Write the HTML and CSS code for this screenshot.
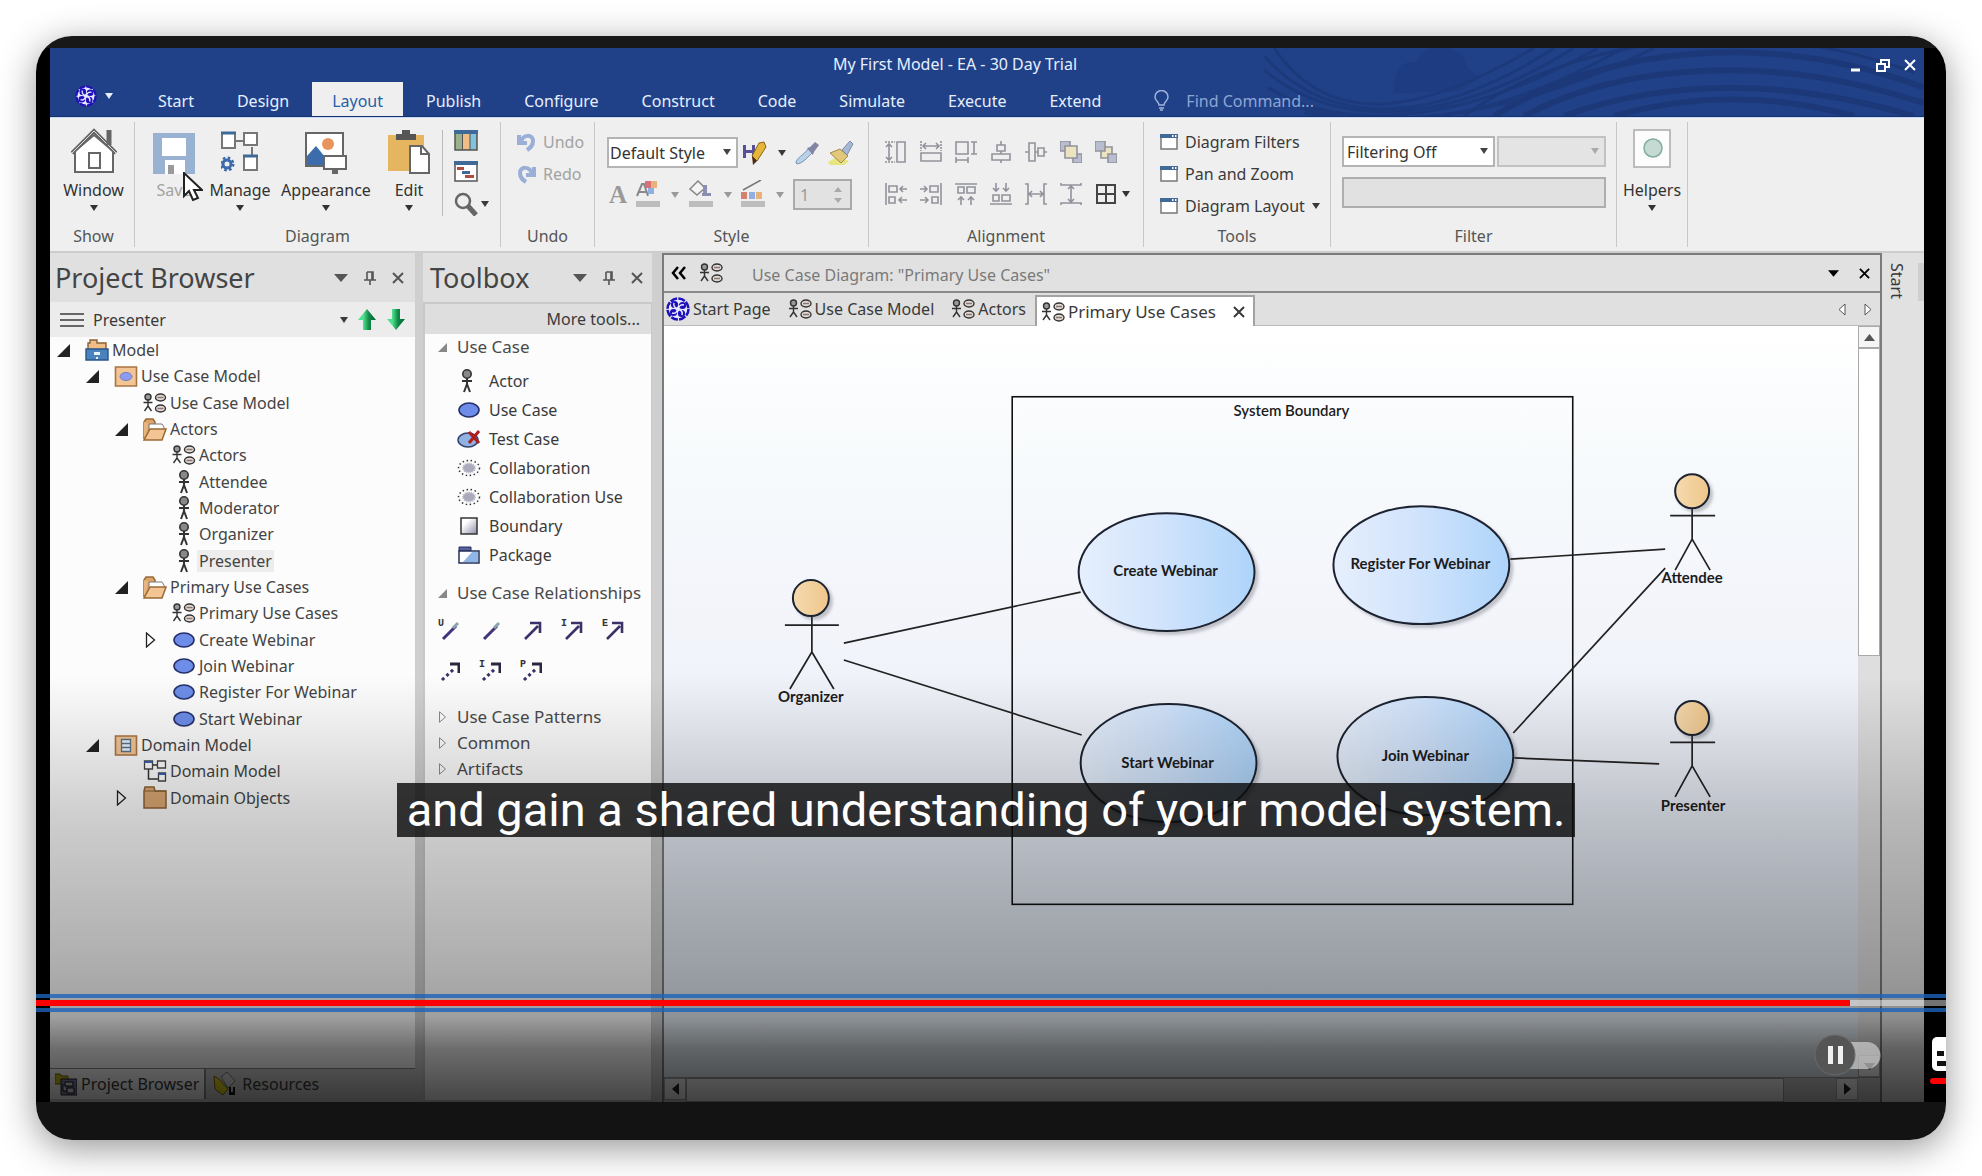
FILE: index.html
```html
<!DOCTYPE html>
<html lang="en">
<head>
<meta charset="utf-8">
<title>My First Model - EA - 30 Day Trial</title>
<link rel="stylesheet" href="styles.css">
</head>
<body>
<svg class="defs" aria-hidden="true">
  <defs>
    <linearGradient id="g-case" x1="0" x2="1"><stop offset="0" stop-color="#e6effc"/><stop offset=".45" stop-color="#d2e4fc"/><stop offset="1" stop-color="#aed4fa"/></linearGradient>
    <linearGradient id="g-head" x1="0" x2="1"><stop offset="0" stop-color="#f5dab0"/><stop offset="1" stop-color="#efc68a"/></linearGradient>
    <linearGradient id="g-box" x1="0" y1="0" x2="1" y2="1"><stop offset=".3" stop-color="#fff"/><stop offset="1" stop-color="#8c8ca8"/></linearGradient>
    <linearGradient id="g-green" x1="0" x2="1"><stop offset=".3" stop-color="#4fe08c"/><stop offset=".6" stop-color="#128a48"/><stop offset="1" stop-color="#063"/></linearGradient>
  </defs>
  <symbol id="caret" viewBox="0 0 8 6"><path d="M0 0h8L4 6z" fill="currentColor"/></symbol>
  <symbol id="caret-wide" viewBox="0 0 14 8"><path d="M0 0h14L7 8z" fill="currentColor"/></symbol>
  <symbol id="cross" viewBox="0 0 12 12"><path d="M1 1l10 10M11 1L1 11" stroke="currentColor" stroke-width="2"/></symbol>
  <symbol id="pin" viewBox="0 0 12 14"><path d="M3 1h6v8M3 1v8M0 9h12M6 9v5M8 1v8" fill="none" stroke="currentColor" stroke-width="1.6"/></symbol>
  <symbol id="open" viewBox="0 0 13 13"><path d="M13 0v13H0z" fill="currentColor"/></symbol>
  <symbol id="closed" viewBox="0 0 10 16"><path d="M1 1l8 7-8 7z" fill="#fff" fill-opacity=".5" stroke="currentColor" stroke-width="1.3"/></symbol>
  <symbol id="logo" viewBox="0 0 24 24"><circle cx="12" cy="12" r="10.500" fill="#e8e8ff" stroke="#1d10b8" stroke-width="2.500" stroke-dasharray="7 1.250"/><g fill="#1d10b8"><circle cx="8.500" cy="7.500" r="3.600"/><circle cx="16.500" cy="8.500" r="3.600"/><circle cx="15.500" cy="16.500" r="3.600"/><circle cx="7.500" cy="15.500" r="3.600"/></g><path d="M12 12c-3-1-5-3-4-6M12 12c1-3 3-5 6-4M12 12c3 1 5 3 4 6M12 12c-1 3-3 5-6 4" fill="none" stroke="#e8e8ff" stroke-width="1.500"/></symbol>
  <symbol id="uc-diagram" viewBox="0 0 23 20"><g fill="none" stroke="#333" stroke-width="1.4"><circle cx="4.500" cy="4" r="3" fill="#999"/><path d="M4.500 7v6M0 9.500h9M4.500 13L1 18M4.500 13l3.500 5"/><ellipse cx="17" cy="4.500" rx="5" ry="3.500" fill="#e3d8d2"/><ellipse cx="17" cy="15.500" rx="5" ry="3.500" fill="#e3d8d2"/><path d="M14 4.500h6M14 15.500h6" stroke="#877"/></g></symbol>
  <symbol id="person" viewBox="0 0 12 24"><circle cx="6" cy="5" r="4.200" fill="#888" stroke="#333" stroke-width="1.600"/><path d="M6 9v7M1 12h10M6 15l-3 8M6 15l3 8" fill="none" stroke="#333" stroke-width="2"/></symbol>
  <symbol id="oval" viewBox="0 0 22 16"><ellipse cx="11" cy="8" rx="10" ry="7" fill="#6d8de8" stroke="#26306a" stroke-width="1.600"/></symbol>
  <symbol id="folder-open" viewBox="0 0 24 23"><path d="M1 21V4l2-3h7l2 3v4" fill="#dba66c" stroke="#9a6a35" stroke-width="1.500"/><path d="M1 4v17l4-12V5z" fill="#e6b47c"/><path d="M6 6h13l2 3v3H6z" fill="#fff" stroke="#777"/><path d="M1 22l6-11h16l-4 11z" fill="#f3c595" stroke="#9a6a35" stroke-width="1.500"/></symbol>
  <symbol id="folder" viewBox="0 0 24 23"><path d="M1 22V5l1-4h9l1 4h11v17z" fill="#dca873" stroke="#8a6235" stroke-width="1.500"/><path d="M1 5h22" stroke="#8a6235"/></symbol>
  <symbol id="model" viewBox="0 0 24 22"><path d="M3 12V4h2V1h7v3h9v8" fill="#efbd85" stroke="#8a6235" stroke-width="1.400"/><path d="M1 10h22v11H1z" fill="#4a82bd" stroke="#27568a" stroke-width="1.400"/><path d="M9 13h6v3H9zM11 18h2v2h-2z" fill="#e8f2fa"/></symbol>
  <symbol id="pkg-uc" viewBox="0 0 23 21"><path d="M1 1h21v19H1z" fill="#f3c595" stroke="#a87440" stroke-width="1.600"/><ellipse cx="11.500" cy="10.500" rx="6" ry="4" fill="#8d9cf0" stroke="#7180c0"/></symbol>
  <symbol id="pkg-class" viewBox="0 0 23 21"><path d="M1 1h21v19H1z" fill="#f3c595" stroke="#a87440" stroke-width="1.600"/><path d="M7 4.500h9v12H7zM7 8.500h9M7 12.500h9" fill="#eaf2fa" stroke="#5a7288" stroke-width="1.300"/></symbol>
  <symbol id="class-diagram" viewBox="0 0 23 22"><path d="M5 9v10h10M9 5h5" fill="none" stroke="#333" stroke-width="1.500"/><path d="M1 1h8v8H1zM14 1h8v7h-8zM15 13h7v8h-7z" fill="#fff" stroke="#444" stroke-width="1.300"/><path d="M1 1h8v2H1zM15 13h7v2h-7z" fill="#3a5fae"/></symbol>
  <symbol id="window" viewBox="0 0 18 16"><path d="M1 1h16v14H1z" fill="#fff" stroke="#777" stroke-width="1.500"/><path d="M0 0h18v4H0z" fill="#3f6a98"/><path d="M12 1h1.500v2H12zM15 1h1.500v2H15z" fill="#fff"/></symbol>
  <symbol id="solid-line" viewBox="0 0 20 20"><path d="M3 18L16 5" stroke="#43337c" stroke-width="3"/><path d="M13 7l5-5" stroke="#8aa3ad" stroke-width="3"/></symbol>
  <symbol id="solid-arrow" viewBox="0 0 20 20"><path d="M3 18L16 5M8 2h10v10" fill="none" stroke="#3b3068" stroke-width="2.600"/></symbol>
  <symbol id="dash-arrow" viewBox="0 0 20 20"><path d="M2 18L15 6" stroke="#3b3068" stroke-width="3" stroke-dasharray="3 3"/><path d="M10 2h9v9" fill="none" stroke="#2b2540" stroke-width="3"/></symbol>
  <symbol id="collab" viewBox="0 0 24 18"><ellipse cx="12" cy="9" rx="10.500" ry="7.500" fill="none" stroke="#333" stroke-width="1.500" stroke-dasharray="1.500 2.500"/><ellipse cx="12" cy="9" rx="6" ry="4.500" fill="#aab" stroke="#bbc" stroke-width="2" stroke-dasharray="1 1"/></symbol>
</svg>

<main class="player">
  <div class="app">
    <header class="titlebar">
      <svg class="swirl" viewBox="0 0 660 69" preserveAspectRatio="none" aria-hidden="true">
        <path d="M130 46c0-30 10-32 22-32 4-20 50-20 50 4l14 12-20 14z" fill="#1e3c82"/>
        <g fill="none" stroke="#1c3a7b" stroke-width="3">
          <path d="M10 0c60 90 160 60 260 0"/><path d="M0 8c70 80 180 65 290-8"/><path d="M0 22c70 60 180 60 310-22"/><path d="M4 40c70 45 190 40 330-40"/><path d="M20 55c80 30 190 30 340-55"/><path d="M40 66c90 15 210 5 350-66"/>
        </g>
        <g fill="none" stroke="#1c3878" stroke-width="6">
          <path d="M230 69C340 0 500-20 660 40"/><path d="M260 69C360 15 510 5 660 56"/><path d="M300 69C400 32 520 30 650 69"/><path d="M350 69c70-20 150-25 240 0"/><path d="M200 69C300-5 480-40 650 25" stroke-width="3"/>
        </g>
      </svg>
      <div class="title-row">
        <h1 class="app-title">My First Model - EA - 30 Day Trial</h1>
        <div class="window-buttons">
          <button aria-label="Minimize"><svg width="12" height="14"><path d="M1 12h9" stroke="#fff" stroke-width="3"/></svg></button>
          <button aria-label="Restore"><svg width="14" height="14"><path d="M5 5V2h8v7h-3M1 6h8v7H1z" fill="none" stroke="#fff" stroke-width="2"/></svg></button>
          <button aria-label="Close"><svg width="12" height="12"><use href="#cross"/></svg></button>
        </div>
      </div>
      <nav class="menu">
        <button class="app-menu" aria-label="Application menu"><svg width="22" height="24"><use href="#logo"/></svg><svg width="8" height="6"><use href="#caret"/></svg></button>
        <a href="#">Start</a><a href="#">Design</a><a href="#" class="active">Layout</a><a href="#">Publish</a><a href="#">Configure</a><a href="#">Construct</a><a href="#">Code</a><a href="#">Simulate</a><a href="#">Execute</a><a href="#">Extend</a>
        <label class="find"><svg width="16" height="22" fill="none" stroke="#9fb2da" stroke-width="1.500"><path d="M5 15c0-3-4-4-4-8a6 6 0 0 1 13 0c0 4-4 5-4 8zM5 18h5M6 20h3"/></svg><input type="text" placeholder="Find Command..." aria-label="Find Command"></label>
      </nav>
    </header>

    <section class="ribbon">
      <div class="group g-show">
        <div class="tools center">
          <button class="big"><svg width="46" height="48" fill="none" stroke="#666" stroke-width="2"><path d="M4 45V24L23 8l19 16v21z" fill="#fff"/><path d="M1 26L23 4l22 22" stroke-width="4"/><path d="M1 26L23 4l22 22" stroke="#ddd" stroke-width="1"/><path d="M38 18V3" stroke-width="5"/><path d="M18 26h11v15H18z"/></svg>Window<svg width="8" height="6"><use href="#caret"/></svg></button>
        </div>
        <h2>Show</h2>
      </div>
      <div class="group g-diagram">
        <div class="tools">
          <button class="big w-s" disabled><svg width="42" height="48"><path d="M0 6h42v41H0z" fill="#9ab2d2"/><path d="M9 11h24v18H9zM12 33h20v14H12z" fill="#fff"/><path d="M15 38h6v9h-6z" fill="#9a9a9a"/></svg>Save</button>
          <button class="big w-m"><svg width="38" height="48" fill="none" stroke="#777" stroke-width="2"><path d="M15 14h8M31 20v8"/><path d="M1 6h13v15H1zM23 6h13v12H23zM23 29h13v14H23z" fill="#fff"/><path d="M0 6h15M22 29h15" stroke="#3f6a98" stroke-width="3"/><circle cx="6" cy="37" r="4" stroke="#3c6cac" stroke-width="3"/><circle cx="6" cy="37" r="6" stroke="#3c6cac" stroke-width="3" stroke-dasharray="2.500 2.200"/></svg>Manage<svg width="8" height="6"><use href="#caret"/></svg></button>
          <button class="big w-l"><svg width="42" height="48"><path d="M1 6h37v33H1z" fill="#fff" stroke="#666" stroke-width="2"/><circle cx="23" cy="17" r="6" fill="#e8945c"/><path d="M2 38V29l9-10 14 17v2z" fill="#3c6cac"/><path d="M19 29h22v13H19z" fill="#fff" stroke="#666" stroke-width="2"/><path d="M27 42h6v5h-6z" fill="#666"/></svg>Appearance<svg width="8" height="6"><use href="#caret"/></svg></button>
          <button class="big w-e"><svg width="42" height="48"><path d="M0 8h36v36H0z" fill="#e5b55f"/><path d="M8 13V7h6V3h8v4h6v6z" fill="#555"/><path d="M22 19h12l7 8v19H22z" fill="#fff" stroke="#666" stroke-width="2"/><path d="M33 19v8h8" fill="none" stroke="#666" stroke-width="2"/></svg>Edit<svg width="8" height="6"><use href="#caret"/></svg></button>
          <div class="small-col">
            <button aria-label="Columns"><svg width="24" height="21"><path d="M1 1h22v19H1z" fill="#99b08a" stroke="#555" stroke-width="1.500"/><path d="M9 4h7v15H9z" fill="#f0bd85"/><path d="M16 4h6v15h-6z" fill="#7fc3de"/><path d="M8.500 4v16M16 4v16" stroke="#555"/><path d="M0 0h24v4H0z" fill="#3f6a98"/></svg></button>
            <button aria-label="Schedule"><svg width="24" height="21"><path d="M1 1h22v19H1z" fill="#fff" stroke="#555" stroke-width="1.500"/><path d="M0 0h24v4H0z" fill="#3f6a98"/><path d="M3 6h7v3H3zM11 14h9v3h-9z" fill="#b04b42"/><path d="M8 10h8v3H8z" fill="#3f6a98"/></svg></button>
            <button aria-label="Zoom"><svg width="24" height="24" fill="none" stroke="#666"><circle cx="9" cy="9" r="7" stroke-width="2.500"/><path d="M14 14l8 9" stroke-width="5"/></svg><svg width="8" height="6"><use href="#caret"/></svg></button>
          </div>
        </div>
        <h2>Diagram</h2>
      </div>
      <div class="group g-undo">
        <div class="tools rows">
          <button class="line" disabled><svg width="19" height="19" fill="none" stroke="#9aaed6" stroke-width="4"><path d="M2 2v8h8M4 9c2-8 12-8 12-1 0 5-3 7-6 9"/></svg>Undo</button>
          <button class="line" disabled><svg width="19" height="19" fill="none" stroke="#9aaed6" stroke-width="4"><path d="M17 2v8H9M15 9C13 1 3 1 3 8c0 5 3 7 6 9"/></svg>Redo</button>
        </div>
        <h2>Undo</h2>
      </div>
      <div class="group g-style">
        <div class="tools pairs">
          <div class="pair">
            <span class="select s-style"><select aria-label="Style"><option>Default Style</option></select><svg width="8" height="6"><use href="#caret"/></svg></span>
            <button aria-label="Save style"><svg width="24" height="24"><path d="M0 4h12v13H0z" fill="#56509a"/><path d="M3 4h6v5H3zM3 12h6v5H3z" fill="#eee"/><path d="M16 2l5-1 2 5-9 14-5-5z" fill="#e4b63a" stroke="#8a6516"/><path d="M9 15l5 5-4 4z" fill="#4a2a10"/></svg><svg width="8" height="6"><use href="#caret"/></svg></button>
            <button aria-label="Pick style"><svg width="24" height="24"><path d="M1 22c0-5 8-8 12-14l4 4c-5 5-9 10-15 11z" fill="#b9d2e8" stroke="#7892b0"/><path d="M12 7l3-1 5-5 4 3-5 7-1 3z" fill="#8285a3"/></svg></button>
            <button aria-label="Apply style"><svg width="26" height="24"><path d="M0 21l9-5 12 4-5 4H2z" fill="#e6e57e"/><path d="M2 12l10-4 8 7-7 7z" fill="#e2c878" stroke="#a58a4c"/><path d="M14 9l8-9 3 3-6 11z" fill="#a7b8d4" stroke="#7d8ba8"/></svg></button>
          </div>
          <div class="pair muted">
            <button class="font-a" aria-label="Font" disabled>A</button>
            <button aria-label="Font colour" disabled><svg width="24" height="30"><path d="M1 16L6 4h2l4 12M3 12h7" fill="none" stroke="#888" stroke-width="2"/><path d="M9 1h6v7H9z" fill="#d8707a"/><path d="M15 1h6v7h-6z" fill="#e8b27c"/><path d="M12 8h6v6h-6z" fill="#8fb0e4"/><path d="M0 21h24v6H0z" fill="#bdbdbd"/></svg><svg width="8" height="6"><use href="#caret"/></svg></button>
            <button aria-label="Fill colour" disabled><svg width="24" height="30"><path d="M1 9l8-8 7 7-8 7z" fill="#f5f5f5" stroke="#888" stroke-width="1.500"/><path d="M14 5h4v8h4v3h-9v-3h1z" fill="#8a8fb0"/><path d="M0 21h24v6H0z" fill="#bdbdbd"/></svg><svg width="8" height="6"><use href="#caret"/></svg></button>
            <button aria-label="Line colour" disabled><svg width="24" height="30"><path d="M2 10L20 0" stroke="#777" stroke-width="1.500"/><path d="M0 12h6v7H0z" fill="#d8806f"/><path d="M8 12h6v7H8z" fill="#8fb0e4"/><path d="M15 12h6v7h-6z" fill="#e8b27c"/><path d="M0 21h24v6H0z" fill="#bdbdbd"/></svg><svg width="8" height="6"><use href="#caret"/></svg></button>
            <span class="spin"><input type="text" value="1" aria-label="Line width" disabled><svg width="8" height="16"><path d="M0 5h8L4 0zM0 11h8l-4 5z" fill="#aaa"/></svg></span>
          </div>
        </div>
        <h2>Style</h2>
      </div>
      <div class="group g-align">
        <div class="tools aligns">
          <button aria-label="Same height"><svg viewBox="0 0 22 22"><path d="M12 1h8v20h-8zM4 3v16M1 6l3-3 3 3M1 16l3 3 3-3"/><path d="M0 1h10M0 21h10" stroke-dasharray="2 1"/></svg></button>
          <button aria-label="Same width"><svg viewBox="0 0 22 22"><path d="M1 12h20v8H1zM3 5h16M6 2L3 5l3 3M16 2l3 3-3 3"/><path d="M1 0v10M21 0v10" stroke-dasharray="2 1"/></svg></button>
          <button aria-label="Same size"><svg viewBox="0 0 22 22"><path d="M1 1h12v12H1zM16 1h6M16 13h6M19 1v12M1 16v6M13 16v6M1 19h12"/></svg></button>
          <button aria-label="Centre horizontally"><svg viewBox="0 0 22 22"><path d="M7 4h8v6H7zM2 13h18v6H2zM11 0v4M11 10v3M11 19v3"/></svg></button>
          <button aria-label="Centre vertically"><svg viewBox="0 0 22 22"><path d="M4 2h6v18H4zM13 7h6v8h-6zM0 11h4M10 11h3M19 11h3"/></svg></button>
          <button aria-label="Bring to front"><svg viewBox="0 0 22 22"><path d="M0 0h10v10H0zM13 13h9v9h-9z" fill="#b9bdd0"/><path d="M5 5h12v12H5z" fill="#ece4c0"/></svg></button>
          <button aria-label="Send to back"><svg viewBox="0 0 22 22"><path d="M6 6h11v11H6z" fill="#ece4c0"/><path d="M0 0h10v10H0zM13 13h9v9h-9z" fill="#b9bdd0"/></svg></button>
          <button aria-label="Align left"><svg viewBox="0 0 22 22"><path d="M1 0v22M4 3h8v6H4zM4 14h6v6H4zM22 6h-7M18 3l-3 3 3 3M22 17h-8M17 14l-3 3 3 3"/></svg></button>
          <button aria-label="Align right"><svg viewBox="0 0 22 22"><path d="M21 0v22M10 3h8v6h-8zM12 14h6v6h-6zM0 6h7M4 3l3 3-3 3M0 17h8M5 14l3 3-3 3"/></svg></button>
          <button aria-label="Align top"><svg viewBox="0 0 22 22"><path d="M0 1h22M3 4h6v6H3zM12 4h8v6h-8zM6 22v-8M3 17l3-3 3 3M16 22v-8M13 17l3-3 3 3"/></svg></button>
          <button aria-label="Align bottom"><svg viewBox="0 0 22 22"><path d="M0 21h22M3 12h6v6H3zM12 12h8v6h-8zM6 0v8M3 5l3 3 3-3M16 0v8M13 5l3 3 3-3"/></svg></button>
          <button aria-label="Space across"><svg viewBox="0 0 22 22"><path d="M0 1h3v20H0M22 1h-3v20h3M4 11h14M7 8l-3 3 3 3M15 8l3 3-3 3"/></svg></button>
          <button aria-label="Space down"><svg viewBox="0 0 22 22"><path d="M1 0v2h20V0M1 22v-2h20v2M11 3v16M8 6l3-3 3 3M8 16l3 3 3-3"/></svg></button>
          <button class="dark" aria-label="Grid"><svg viewBox="0 0 22 22"><path d="M2 2h18v18H2zM11 2v18M2 11h18"/></svg></button>
          <svg class="grid-caret" width="8" height="6"><use href="#caret"/></svg>
        </div>
        <h2>Alignment</h2>
      </div>
      <div class="group g-tools">
        <div class="tools rows">
          <button class="line"><svg width="18" height="16"><use href="#window"/></svg>Diagram Filters</button>
          <button class="line"><svg width="18" height="16"><use href="#window"/></svg>Pan and Zoom</button>
          <button class="line"><svg width="18" height="16"><use href="#window"/></svg>Diagram Layout<svg width="8" height="6"><use href="#caret"/></svg></button>
        </div>
        <h2>Tools</h2>
      </div>
      <div class="group g-filter">
        <div class="tools filters">
          <div class="filter-row">
            <span class="select s-filter"><select aria-label="Filter mode"><option>Filtering Off</option></select><svg width="8" height="6"><use href="#caret"/></svg></span>
            <span class="select s-off"><select aria-label="Filter field" disabled><option></option></select><svg width="8" height="6"><use href="#caret"/></svg></span>
          </div>
          <input class="filter-text" type="text" aria-label="Filter text" disabled>
        </div>
        <h2>Filter</h2>
      </div>
      <div class="group g-help">
        <div class="tools center">
          <button class="big"><svg width="38" height="48"><path d="M1 3h36v37H1z" fill="#fcfcfc" stroke="#aaa" stroke-width="1.500"/><circle cx="20" cy="21" r="9" fill="#c5dad2" stroke="#7fae9c" stroke-width="1.500"/></svg>Helpers<svg width="8" height="6"><use href="#caret"/></svg></button>
        </div>
      </div>
    </section>

    <div class="workspace">
      <section class="panel browser">
        <div class="panel-head"><h2>Project Browser</h2>
          <button aria-label="Panel menu"><svg width="14" height="8"><use href="#caret-wide"/></svg></button><button aria-label="Pin panel"><svg width="12" height="14"><use href="#pin"/></svg></button><button aria-label="Close panel"><svg width="12" height="12"><use href="#cross"/></svg></button>
        </div>
        <div class="locator">
          <svg width="24" height="16"><path d="M0 2h24M0 8h24M0 14h24" stroke="#666" stroke-width="2"/></svg><span>Presenter</span>
          <svg width="8" height="6"><use href="#caret"/></svg>
          <button aria-label="Move up"><svg width="20" height="22"><path d="M10 0l9 11h-5v10H6V11H1z" fill="url(#g-green)"/></svg></button>
          <button aria-label="Move down"><svg width="20" height="22"><path d="M10 21l9-11h-5V0H6v10H1z" fill="url(#g-green)"/></svg></button>
        </div>
        <ul class="tree">
          <li class="l0"><svg class="tw" width="13" height="13"><use href="#open"/></svg><svg width="24" height="22"><use href="#model"/></svg><span>Model</span></li>
          <li class="l1"><svg class="tw" width="13" height="13"><use href="#open"/></svg><svg width="24" height="21"><use href="#pkg-uc"/></svg><span>Use Case Model</span></li>
          <li class="l2"><i class="tw"></i><svg width="24" height="20"><use href="#uc-diagram"/></svg><span>Use Case Model</span></li>
          <li class="l2"><svg class="tw" width="13" height="13"><use href="#open"/></svg><svg width="24" height="23"><use href="#folder-open"/></svg><span>Actors</span></li>
          <li class="l3"><i class="tw"></i><svg width="24" height="20"><use href="#uc-diagram"/></svg><span>Actors</span></li>
          <li class="l3"><i class="tw"></i><svg width="24" height="24"><use href="#person"/></svg><span>Attendee</span></li>
          <li class="l3"><i class="tw"></i><svg width="24" height="24"><use href="#person"/></svg><span>Moderator</span></li>
          <li class="l3"><i class="tw"></i><svg width="24" height="24"><use href="#person"/></svg><span>Organizer</span></li>
          <li class="l3 selected"><i class="tw"></i><svg width="24" height="24"><use href="#person"/></svg><span>Presenter</span></li>
          <li class="l2"><svg class="tw" width="13" height="13"><use href="#open"/></svg><svg width="24" height="23"><use href="#folder-open"/></svg><span>Primary Use Cases</span></li>
          <li class="l3"><i class="tw"></i><svg width="24" height="20"><use href="#uc-diagram"/></svg><span>Primary Use Cases</span></li>
          <li class="l3"><svg class="tw" width="13" height="16"><use href="#closed"/></svg><svg width="24" height="16"><use href="#oval"/></svg><span>Create Webinar</span></li>
          <li class="l3"><i class="tw"></i><svg width="24" height="16"><use href="#oval"/></svg><span>Join Webinar</span></li>
          <li class="l3"><i class="tw"></i><svg width="24" height="16"><use href="#oval"/></svg><span>Register For Webinar</span></li>
          <li class="l3"><i class="tw"></i><svg width="24" height="16"><use href="#oval"/></svg><span>Start Webinar</span></li>
          <li class="l1"><svg class="tw" width="13" height="13"><use href="#open"/></svg><svg width="24" height="21"><use href="#pkg-class"/></svg><span>Domain Model</span></li>
          <li class="l2"><i class="tw"></i><svg width="24" height="22"><use href="#class-diagram"/></svg><span>Domain Model</span></li>
          <li class="l2"><svg class="tw" width="13" height="16"><use href="#closed"/></svg><svg width="24" height="23"><use href="#folder"/></svg><span>Domain Objects</span></li>
        </ul>
        <div class="panel-tabs">
          <button class="current"><svg width="22" height="24"><path d="M0 2h5l2 2h6v8H0z" fill="#c9bb1e" stroke="#6e6712"/><path d="M6 7h16v16H6z" fill="#7d7fa8" stroke="#222"/><path d="M10 10h8v4h-8zM12 16h7v5h-7zM8 12v7h4" fill="#ddd" stroke="#111"/></svg>Project Browser</button>
          <button><svg width="24" height="24"><path d="M1 4l5 3 9 10-5 6-8-6z" fill="#e6d520" stroke="#6e6712"/><path d="M8 5l6-5 8 9-7 7z" fill="#ddd" stroke="#777"/><path d="M16 23v-8h2v5h2v-5h2v8z" fill="#111"/></svg>Resources</button>
        </div>
      </section>

      <section class="panel toolbox">
        <div class="panel-head"><h2>Toolbox</h2>
          <button aria-label="Toolbox menu"><svg width="14" height="8"><use href="#caret-wide"/></svg></button><button aria-label="Pin toolbox"><svg width="12" height="14"><use href="#pin"/></svg></button><button aria-label="Close toolbox"><svg width="12" height="12"><use href="#cross"/></svg></button>
        </div>
        <div class="toolbox-body">
          <a href="#" class="more">More tools...</a>
          <h3><svg width="9" height="9"><use href="#open"/></svg>Use Case</h3>
          <ul class="items">
            <li><svg class="figure" width="12" height="24"><use href="#person"/></svg><span>Actor</span></li>
            <li><svg width="22" height="16"><use href="#oval"/></svg><span>Use Case</span></li>
            <li><svg width="24" height="18"><ellipse cx="11" cy="10" rx="10" ry="7" fill="#8fb2e0" stroke="#33406e" stroke-width="1.500"/><path d="M12 2l10 11M22 1L12 13" stroke="#b01c1c" stroke-width="3"/></svg><span>Test Case</span></li>
            <li><svg width="24" height="18"><use href="#collab"/></svg><span>Collaboration</span></li>
            <li><svg width="24" height="18"><use href="#collab"/></svg><span>Collaboration Use</span></li>
            <li><svg width="20" height="18"><path d="M2 1h16v16H2z" fill="url(#g-box)" stroke="#333" stroke-width="1.500"/></svg><span>Boundary</span></li>
            <li><svg width="22" height="18"><path d="M1 1h12v4H1z" fill="#56609a" stroke="#25305a"/><path d="M1 5h20v12H1z" fill="#fff" stroke="#25305a" stroke-width="1.500"/><path d="M20 6v10H5L14 6z" fill="#8fb6e6"/></svg><span>Package</span></li>
          </ul>
          <h3><svg width="9" height="9"><use href="#open"/></svg>Use Case Relationships</h3>
          <div class="relations">
            <button aria-label="Use"><small>U</small><svg width="20" height="20"><use href="#solid-line"/></svg></button>
            <button aria-label="Associate"><svg width="20" height="20"><use href="#solid-line"/></svg></button>
            <button aria-label="Generalize"><svg width="20" height="20"><use href="#solid-arrow"/></svg></button>
            <button aria-label="Include"><small>I</small><svg width="20" height="20"><use href="#solid-arrow"/></svg></button>
            <button aria-label="Extend"><small>E</small><svg width="20" height="20"><use href="#solid-arrow"/></svg></button>
            <button aria-label="Realize"><svg width="20" height="20"><use href="#dash-arrow"/></svg></button>
            <button aria-label="Invokes"><small>I</small><svg width="20" height="20"><use href="#dash-arrow"/></svg></button>
            <button aria-label="Precedes"><small>P</small><svg width="20" height="20"><use href="#dash-arrow"/></svg></button>
          </div>
          <h3 class="folded"><svg width="9" height="12"><use href="#closed"/></svg>Use Case Patterns</h3>
          <h3 class="folded"><svg width="9" height="12"><use href="#closed"/></svg>Common</h3>
          <h3 class="folded"><svg width="9" height="12"><use href="#closed"/></svg>Artifacts</h3>
        </div>
      </section>

      <section class="document">
        <div class="doc-head">
          <svg width="15" height="14" fill="none" stroke="#000" stroke-width="2.500"><path d="M7 1L2 7l5 6M14 1L9 7l5 6"/></svg>
          <svg width="23" height="20"><use href="#uc-diagram"/></svg>
          <h2>Use Case Diagram: "Primary Use Cases"</h2>
          <button aria-label="Diagram menu"><svg width="11" height="7"><use href="#caret-wide"/></svg></button><button aria-label="Close diagram"><svg width="11" height="11"><use href="#cross"/></svg></button>
        </div>
        <div class="doc-tabs">
          <button><svg width="24" height="24"><use href="#logo"/></svg>Start Page</button>
          <button><svg width="23" height="20"><use href="#uc-diagram"/></svg>Use Case Model</button>
          <button><svg width="23" height="20"><use href="#uc-diagram"/></svg>Actors</button>
          <button class="current"><svg width="23" height="20"><use href="#uc-diagram"/></svg>Primary Use Cases<svg class="shut" width="12" height="12"><use href="#cross"/></svg></button>
          <span class="tab-nav"><button aria-label="Previous tab"><svg width="8" height="13"><path d="M7 1v11L1 6.500z" fill="#fff" stroke="#555"/></svg></button><button aria-label="Next tab"><svg width="8" height="13"><path d="M1 1v11l6-5.500z" fill="#fff" stroke="#555"/></svg></button></span>
        </div>
        <div class="canvas-row">
          <svg class="canvas" viewBox="664 326 1195 751" role="img" aria-label="Primary Use Cases diagram">
            <defs><filter id="shade" x="-10%" y="-10%" width="125%" height="125%"><feDropShadow dx="3" dy="3" stdDeviation="1.500" flood-color="#445" flood-opacity=".3"/></filter></defs>
            <rect x="1012.500" y="396.500" width="561" height="508" fill="none" stroke="#111" stroke-width="1.600"/>
            <g stroke="#222" stroke-width="1.700" fill="none">
              <path d="M844 643l237-51M844 660l238 75M1511 559l155-10M1514 733l152-165M1515 758l145 6"/>
              <path d="M785 625h54M812 616v36M812 652l-22 37M812 652l22 37M1671 515.500h45M1693 508v31M1693 539l-17 31M1693 539l18 31M1671 742.500h45M1693 735v31M1693 766l-17 31M1693 766l18 31"/>
            </g>
            <g stroke="#1c2430" stroke-width="2" filter="url(#shade)">
              <g fill="url(#g-case)"><ellipse cx="1167" cy="572" rx="88" ry="59"/><ellipse cx="1169" cy="763" rx="88" ry="59"/><ellipse cx="1422" cy="565" rx="88" ry="59"/><ellipse cx="1426" cy="756" rx="88" ry="59"/></g>
              <g fill="url(#g-head)"><circle cx="811" cy="598" r="18"/><circle cx="1693" cy="491" r="17"/><circle cx="1693" cy="718" r="17"/></g>
            </g>
            <g class="labels">
              <text class="boundary" x="1292" y="416">System Boundary</text>
              <text x="1166" y="576">Create Webinar</text><text x="1168" y="768">Start Webinar</text><text x="1421" y="569">Register For Webinar</text><text x="1426" y="761">Join Webinar</text>
              <text x="811" y="702">Organizer</text><text x="1693" y="583">Attendee</text><text x="1694" y="811">Presenter</text>
            </g>
          </svg>
          <div class="vscroll"><span class="sb"><svg width="11" height="7"><path d="M0 7h11L5.500 0z" fill="#555"/></svg></span><span class="thumb"></span><span class="sb end"><svg width="11" height="7"><path d="M0 0h11L5.500 7z" fill="#222"/></svg></span></div>
        </div>
        <div class="hscroll"><span class="sb"><svg width="7" height="12"><path d="M7 0v12L0 6z" fill="#222"/></svg></span><span class="thumb"></span><span class="sb"><svg width="7" height="12"><path d="M0 0v12l7-6z" fill="#222"/></svg></span></div>
      </section>
      <aside class="dock"><button>Start</button></aside>
    </div>
  </div>

  <div class="scrim"></div>
  <svg class="cursor" width="20" height="30" viewBox="0 0 20 30"><path d="M1 1v23l5-5 4 9 5-2-4-8h8z" fill="#fff" stroke="#222" stroke-width="2"/></svg>
  <p class="caption"><span>and gain a shared understanding of your model system.</span></p>
  <div class="seek"><input type="range" min="0" max="100" value="95" aria-label="Seek"></div>
  <button class="autoplay" aria-label="Autoplay"><svg width="80" height="44"><path d="M30 9h24a13 13 0 0 1 0 27H30z" fill="#d8d8d8" fill-opacity=".65"/><circle cx="22" cy="22" r="20" fill="#555" stroke="#6a6a6a"/><path d="M15 13h5v18h-5zM25 13h5v18h-5z" fill="#f0f0f0"/></svg></button>
  <button class="cc" aria-label="Subtitles"><svg width="40" height="50"><rect x="2" y="1" width="50" height="34" rx="5" fill="#fff"/><path d="M7 15h7v5H7zM7 25h30v5H7z" fill="#111"/><rect x="0" y="42" width="50" height="6" rx="3" fill="#f00"/></svg></button>
</main>
</body>
</html>
```
FILE: styles.css
```css
* { box-sizing: border-box; }
body { margin: 0; min-height: 100vh; padding: 36px; display: flex; background: #fff; color: #3a3a3a; font: 16px/22px "Noto Sans", "Open Sans", sans-serif; }
h1, h2, h3, p, ul { margin: 0; padding: 0; font-weight: 400; font-size: 16px; }
ul { list-style: none; }
button { margin: 0; padding: 0; border: 0; background: none; color: inherit; font: inherit; display: inline-flex; align-items: center; white-space: nowrap; }
select, input { font: inherit; color: inherit; }
a { color: inherit; text-decoration: none; }
svg { display: block; flex: none; }
.defs { position: absolute; width: 0; height: 0; }

.player { position: relative; flex: 1; min-width: 0; display: flex; padding: 12px 22px 38px 14px; overflow: hidden; border-radius: 36px; background: linear-gradient(#181818 0 12px, #000 12px calc(100% - 38px), #131313 calc(100% - 38px)); }
body::before { content: ""; position: absolute; inset: 36px; border-radius: 36px; box-shadow: 0 8px 36px rgba(0, 0, 0, .42); z-index: -1; }
.app { flex: 1; min-width: 0; display: flex; flex-direction: column; background: #e0e0e0; overflow: hidden; }

.titlebar { position: relative; background: #204188; color: #e6efff; border-bottom: 1px solid #16306c; }
.swirl { position: absolute; right: 0; top: 0; width: 660px; height: 100%; }
.title-row { position: relative; display: flex; align-items: center; height: 34px; }
.app-title { flex: 1; padding: 0 64px 2px 0; text-align: center; }
.window-buttons { position: absolute; right: 8px; display: flex; gap: 14px; color: #fff; }
.menu { position: relative; display: flex; gap: 3px; height: 34px; align-items: stretch; }
.menu a { padding: 8px 20px 4px; }
.menu a.active { background: #efefef; color: #1f5fa8; }
.app-menu { width: 85px; padding: 0 0 6px 25px; gap: 8px; }
.find { display: flex; align-items: center; gap: 16px; margin-left: 30px; padding-top: 3px; }
.find input { width: 160px; padding: 0; border: 0; background: none; }
.find input::placeholder { color: #8ea5d2; opacity: 1; }

.ribbon { display: flex; height: 136px; padding: 4px 0; background: #efefef; border-top: 1px solid #c6dcfa; border-bottom: 2px solid #cdcdcd; }
.group { display: flex; flex-direction: column; border-right: 1px solid #c8c8c8; }
.group h2 { text-align: center; color: #555; }
.tools { flex: 1; display: flex; padding-top: 5px; }
.center { justify-content: center; }
.g-show { width: 85px; padding-left: 3px; } .g-diagram { width: 366px; } .g-undo { width: 94px; } .g-style { width: 274px; } .g-align { width: 275px; } .g-tools { width: 187px; } .g-filter { width: 286px; } .g-help { width: 71px; }
.big { flex-direction: column; justify-content: flex-start; color: #333; }
.big > svg:last-child:not(:first-child) { margin-top: 4px; }
.big > svg:first-child { margin-bottom: 4px; }
.big:disabled, .line:disabled { color: #a2a2a2; }
.g-diagram .tools { padding-left: 9px; }
.w-s { width: 60px; } .w-m { width: 72px; } .w-l { width: 100px; } .w-e { width: 66px; }
.small-col { display: flex; flex-direction: column; align-items: flex-start; gap: 10px; height: 86px; margin-top: 3px; padding-left: 11px; border-left: 1px solid #bbb; }
.small-col button { gap: 3px; }
.rows { flex-direction: column; align-items: flex-start; gap: 10px; padding-top: 9px; padding-left: 16px; }
.line { gap: 7px; color: #3a3a3a; }
.pairs { flex-direction: column; gap: 11px; padding: 15px 0 0 12px; }
.pair { display: flex; align-items: center; gap: 9px; height: 31px; }
.pair > button { gap: 11px; }
.muted { color: #999; justify-content: space-between; padding: 0 16px 0 2px; }
.font-a { font: 700 25px/30px "Liberation Serif", serif; color: #999; }
.select { position: relative; display: flex; }
.select select { width: 100%; height: 31px; padding: 0 6px 0 3px; border: 2px solid #b4b4b4; border-radius: 0; background: #fff; color: #333; appearance: none; }
.select select:disabled { background: #e0e0e0; border-color: #b0b0b0; }
.select svg { position: absolute; right: 7px; top: 12px; pointer-events: none; color: #444; }
.s-style { width: 131px; margin-right: -4px; } .s-filter { width: 154px; } .s-off { width: 110px; }
.s-style select { padding-left: 1px; } 
.s-off svg { color: #aaa; }
.spin { position: relative; display: flex; }
.spin input { width: 59px; height: 31px; padding: 0 5px; border: 2px solid #aaa; background: #e2e2e2; color: #999; }
.spin svg { position: absolute; right: 10px; top: 8px; }
.aligns { position: relative; display: grid; grid-template-columns: repeat(7, 22px); column-gap: 13px; row-gap: 20px; align-content: start; padding: 19px 0 0 16px; }
.aligns button svg { width: 22px; height: 22px; fill: none; stroke: #92929c; stroke-width: 1.6; }
.aligns .dark svg { stroke: #444; stroke-width: 2; }
.grid-caret { position: absolute; right: 13px; top: 69px; color: #333; }
.filters { flex-direction: column; gap: 10px; padding: 14px 10px 0 11px; }
.filter-row { display: flex; gap: 2px; }
.filter-text { width: 264px; height: 31px; border: 2px solid #aeaeae; background: #e1e1e1; }

.workspace { flex: 1; min-height: 0; display: flex; }
.panel { display: flex; flex-direction: column; background: #fcfcfc; }
.browser { width: 373px; border-right: 8px solid #cfcfcf; }
.toolbox { width: 239px; border-right: 10px solid #cfcfcf; background: #e0e0e0; }
.panel-head { display: flex; align-items: center; gap: 16px; height: 49px; padding: 0 11px 0 5px; background: #e0e0e0; color: #555; }
.toolbox .panel-head { padding: 0 9px 0 7px; }
.panel-head h2 { flex: 1; font-size: 27px; line-height: 40px; color: #444; }
.locator { display: flex; align-items: center; gap: 9px; height: 35px; padding: 0 9px 0 10px; background: #ececec; }
.locator span { flex: 1; }
.tree { display: grid; grid-auto-rows: 1fr; height: 474px; color: #444; }
.tree li { display: flex; align-items: center; }
.tree .tw { width: 13px; margin-right: 15px; color: #222; }
.tree span { margin-left: 1px; padding: 0 2px; }
.l0 { padding-left: 7px; } .l1 { padding-left: 36px; } .l2 { padding-left: 65px; } .l3 { padding-left: 94px; }
.selected span { background: #ededed; }
.panel-tabs { display: flex; margin-top: auto; height: 34px; padding-bottom: 3px; background: #d0d0d0; border-top: 1px solid #888; }
.panel-tabs button { gap: 4px; padding: 0 5px; }
.panel-tabs .current { background: #fcfcfc; border-right: 2px solid #888; }
.panel-tabs button + button { gap: 5px; padding-left: 7px; }

.toolbox-body { flex: 1; overflow: hidden; border: 2px solid #c9c9c9; border-right-width: 1px; background: #fcfcfc; }
.more { display: block; padding: 4px 11px; height: 30px; text-align: right; background: #dedede; }
.toolbox h3 { display: flex; align-items: center; gap: 10px; height: 26px; padding-left: 13px; font-size: 17px; white-space: nowrap; color: #4a4a4a; }
.toolbox h3 svg { color: #888; }
.items { display: grid; grid-auto-rows: 29px; margin: 6px 0 11px; }
.items li { display: grid; grid-template-columns: 24px 1fr; align-items: center; column-gap: 8px; padding-left: 32px; }
.items svg { justify-self: center; }
.items .figure { justify-self: start; margin-left: 4px; }
.relations { display: grid; grid-template-columns: repeat(5, 31px); column-gap: 10px; row-gap: 11px; padding: 10px 0 17px 10px; }
.relations button { position: relative; height: 30px; padding-left: 5px; }
.relations small { position: absolute; left: 3px; top: 3px; font: 700 10px/10px "Liberation Mono", monospace; color: #333; }

.document { flex: 1; min-width: 0; display: flex; flex-direction: column; border: 2px solid #7b7b7b; border-bottom: 0; }
.doc-head { display: flex; align-items: center; gap: 14px; height: 38px; padding: 0 10px 0 7px; background: #e1e1e1; border-bottom: 2px solid #8a8a8a; color: #000; }
.doc-head h2 { flex: 1; padding: 3px 0 0 15px; color: #7a7a7a; }
.doc-head button { margin-left: 6px; }
.doc-tabs { display: flex; height: 33px; padding-left: 2px; background: #e0e0e0; border-bottom: 1px solid #bbb; }
.doc-tabs > button { gap: 3px; margin-right: 18px; }
.doc-tabs > .current { margin: 2px 0 -1px -9px; padding: 0 8px 0 5px; background: #fff; border: 2px solid #a2a2a2; border-bottom: 0; font-size: 17px; }
.shut { margin-left: 14px; }
.tab-nav { display: flex; gap: 18px; margin-left: auto; padding-right: 8px; }
.canvas-row { flex: 1; min-height: 0; display: flex; }
.canvas { flex: 1 1 0; width: 0; min-width: 0; height: 100%; background: linear-gradient(#fff 0, #f7fafc 18%, #f1f3fa 45%, #e2e8f2 75%, #dfe8ef 100%); }
.labels { font: 700 15px Lato, sans-serif; text-anchor: middle; fill: #1c1c1c; }
.labels .boundary { font-size: 15px; font-weight: 600; }
.vscroll { width: 22px; display: flex; flex-direction: column; background: #dedede; }
.sb { display: flex; align-items: center; justify-content: center; width: 22px; height: 22px; border: 1px solid #aaa; background: #f5f5f5; }
.vscroll .thumb { height: 41%; background: #fff; border: 1px solid #aaa; }
.vscroll .end { margin-top: auto; }
.hscroll { display: flex; height: 25px; padding-right: 22px; background: #c8c8c8; border-top: 1px solid #999; }
.hscroll .thumb { width: 92%; margin-right: auto; background: #f2f2f2; border: 1px solid #999; }
.dock { display: flex; align-items: flex-start; width: 42px; padding: 10px 0 0 4px; background: linear-gradient(90deg, #e1e1e1 36px, #cfcfcf 36px 100%) 0 10px / 100% 38px no-repeat, #e1e1e1; }
.dock button { writing-mode: vertical-rl; }

.scrim { position: absolute; inset: 0 22px 38px 14px; pointer-events: none; background: linear-gradient(rgba(0, 0, 0, 0) 60%, rgba(0, 0, 0, .18) 73%, rgba(0, 0, 0, .31) 87%, rgba(0, 0, 0, .37) 92%, rgba(0, 0, 0, .57) 95%, rgba(0, 0, 0, .73)); }
.cursor { position: absolute; left: 147px; top: 136px; }
.caption { position: absolute; left: 0; right: 0; top: 747px; display: flex; justify-content: center; padding-right: 10px; color: #fff; font: 47px/54px Roboto, sans-serif; white-space: nowrap; }
.caption span { padding: 0 10px; background: rgba(12, 12, 12, .82); }
.seek { position: absolute; left: 0; right: 0; bottom: 128px; height: 18px; display: flex; align-items: center; border: solid rgba(27, 99, 184, .8); border-width: 4px 0; }
.seek input { appearance: none; width: 100%; height: 6px; margin: 0; background: linear-gradient(90deg, #f00 95%, rgba(255, 255, 255, .45) 95%); }
.seek input::-webkit-slider-thumb { appearance: none; width: 0; height: 0; }
.autoplay { position: absolute; right: 53px; bottom: 63px; }
.cc { position: absolute; right: -24px; bottom: 54px; }
```
